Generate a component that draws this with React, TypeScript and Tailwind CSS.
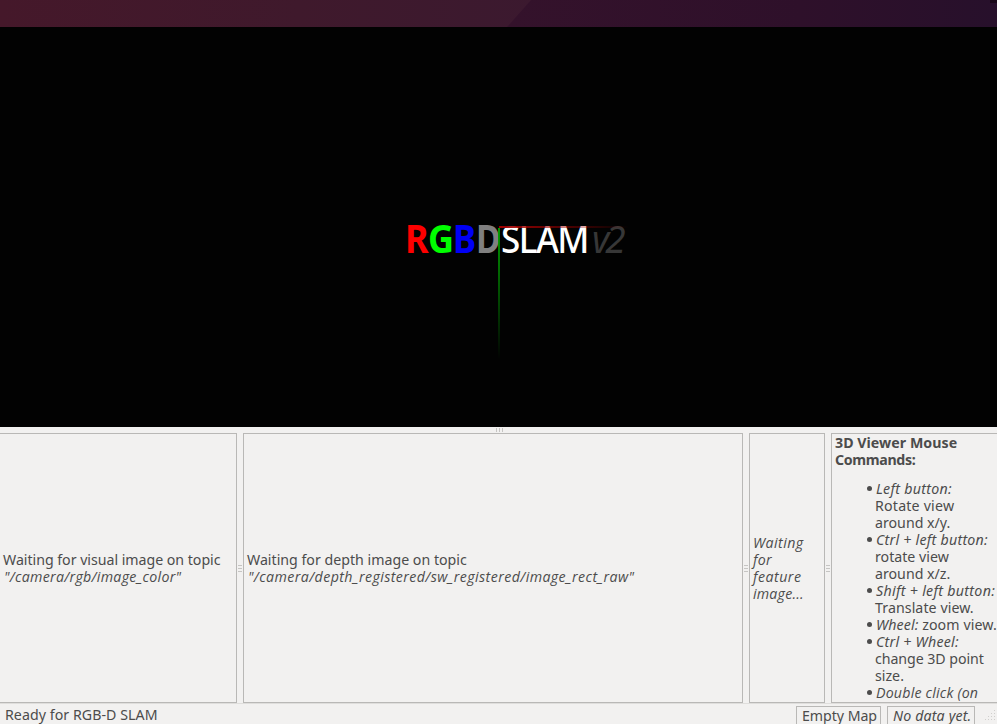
import type { ReactNode } from 'react';

function Grip({ vertical = false }: { vertical?: boolean }) {
  return vertical ? (
    <div className="flex h-full w-[6px] shrink-0 flex-col items-center justify-center gap-[2px]">
      <i className="h-px w-[4px] bg-[#c6c5c3]" />
      <i className="h-px w-[4px] bg-[#c6c5c3]" />
      <i className="h-px w-[4px] bg-[#c6c5c3]" />
    </div>
  ) : (
    <div className="flex h-[6px] w-full shrink-0 items-center justify-center gap-[2px] pl-[2px]">
      <i className="h-[4px] w-px bg-[#c6c5c3]" />
      <i className="h-[4px] w-px bg-[#c6c5c3]" />
      <i className="h-[4px] w-px bg-[#c6c5c3]" />
    </div>
  );
}

function Line({ className = '', children }: { className?: string; children: ReactNode }) {
  return <div className={`h-[17px] whitespace-nowrap ${className}`}>{children}</div>;
}

function Item({ children }: { children: ReactNode }) {
  return (
    <li className="relative">
      <span className="absolute top-[6px] -left-[8px] size-[5px] rounded-full bg-[#4c4c4c]" />
      {children}
    </li>
  );
}

function Logo() {
  return (
    <div className="flex h-[40px] w-[222px] text-[40px] leading-[40px] font-bold">
      <span className="w-[23px] origin-left scale-x-[0.9] text-[#fe0000]">R</span>
      <span className="w-[25px] origin-left scale-x-[0.9] text-[#00fe00]">G</span>
      <span className="w-[23px] origin-left scale-x-[0.87] text-[#0000f5]">B</span>
      <span className="w-[25px] origin-left scale-x-[0.84] text-[#808080]">D</span>
      <span className="w-[91px] origin-left scale-x-[0.91] text-[38.5px] font-medium tracking-[-1.7px] text-white">SLAM</span>
      <span className="w-[34px] origin-left scale-x-[0.97] text-[38px] font-normal tracking-[-4px] text-[#373737] italic">v2</span>
    </div>
  );
}

function SizeGrip() {
  return (
    <svg className="mt-[6px] ml-[9px] h-[12px] w-[13px]" viewBox="0 0 13 12" fill="#d0cfcd">
      <path d="M10 0h1v1h-1zM7 3h1v1h-1zM10 3h1v1h-1zM4 6h1v1h-1zM7 6h1v1h-1zM10 6h1v1h-1zM1 9h1v1h-1zM4 9h1v1h-1zM7 9h1v1h-1zM10 9h1v1h-1z" />
    </svg>
  );
}

export default function App() {
  return (
    <div className="flex h-[724px] w-[997px] flex-col overflow-hidden bg-[#f2f1f0] font-['Noto_Sans','Open_Sans',sans-serif] text-[14.2px] leading-[17px] text-[#4c4c4c]">
      <header className="flex h-[27px] shrink-0 justify-end bg-[linear-gradient(90deg,#45182a_0%,#3f192c_30%,#3b192f_55%,#3a192f_100%)]">
        <div className="h-full w-[490px] bg-[linear-gradient(90deg,#34122b_0%,#2e102a_60%,#27102b_100%)] [clip-path:polygon(24px_0,100%_0,100%_100%,0_100%)]">
          <div className="ml-auto h-[3px] w-[7px] bg-[#190818]" />
        </div>
      </header>
      <main className="relative h-[400px] shrink-0 bg-[#020202]">
        <div className="absolute top-[191px] left-[405px]"><Logo /></div>
        <div className="absolute top-[199px] left-[499px] h-[2px] w-[130px] bg-linear-to-r from-[#a00000] to-transparent" />
        <div className="absolute top-[201px] left-[498px] h-[131px] w-[2px] bg-linear-to-b from-[#009c00] to-transparent" />
      </main>
      <Grip />
      <section className="flex h-[270px] shrink-0">
        <div className="flex w-[237px] shrink-0 flex-col justify-center border border-l-0 border-[#b9b8b6] pl-[3px]">
          <Line className="tracking-[-0.03px]">Waiting for visual image on topic</Line>
          <Line className="pl-px font-['Open_Sans',sans-serif] tracking-[0.29px] italic">"/camera/rgb/image_color"</Line>
        </div>
        <Grip vertical />
        <div className="flex w-[500px] shrink-0 flex-col justify-center border border-[#b9b8b6] pl-[3px]">
          <Line>Waiting for depth image on topic</Line>
          <Line className="pl-px font-['Open_Sans',sans-serif] tracking-[0.41px] italic">"/camera/depth_registered/sw_registered/image_rect_raw"</Line>
        </div>
        <Grip vertical />
        <div className="flex w-[76px] shrink-0 flex-col justify-center border border-[#b9b8b6] pl-[3px] font-['Open_Sans',sans-serif] italic">
          <Line className="tracking-[0.45px]">Waiting</Line>
          <Line className="tracking-[0.35px]">for</Line>
          <Line className="tracking-[0.5px]">feature</Line>
          <Line className="tracking-[0.2px]">image...</Line>
        </div>
        <Grip vertical />
        <div className="w-[166px] shrink-0 overflow-hidden border border-r-0 border-[#b9b8b6] pl-[3px]">
          <div className="font-bold">
            <Line className="tracking-[0.04px]">3D Viewer Mouse</Line>
            <Line className="tracking-[-0.35px]">Commands:</Line>
          </div>
          <ul className="mt-[12px] ml-[40px]">
            <Item>
              <Line className="pl-px tracking-[0.3px] italic">Left button:</Line>
              <Line className="tracking-[0.2px]">Rotate view</Line>
              <Line>around x/y.</Line>
            </Item>
            <Item>
              <Line className="pl-px tracking-[0.25px] italic">Ctrl + left button:</Line>
              <Line>rotate view</Line>
              <Line>around x/z.</Line>
            </Item>
            <Item>
              <Line className="pl-px tracking-[0.3px] italic">Shift + left button:</Line>
              <Line className="tracking-[0.07px]">Translate view.</Line>
            </Item>
            <Item>
              <Line className="pl-px tracking-[0.09px]"><em>Wheel:</em> zoom view.</Line>
            </Item>
            <Item>
              <Line className="pl-px tracking-[0.25px] italic">Ctrl + Wheel:</Line>
              <Line className="tracking-[-0.06px]">change 3D point</Line>
              <Line>size.</Line>
            </Item>
            <Item>
              <Line className="pl-px font-['Open_Sans',sans-serif] tracking-[0.2px] italic">Double click (on</Line>
            </Item>
          </ul>
        </div>
      </section>
      <footer className="flex h-[21px] shrink-0 border-t border-[#dfdedc]">
        <div className="w-[796px] pt-[2px] pl-[5px] tracking-[0.05px]">Ready for RGB-D SLAM</div>
        <div className="mt-[2px] w-[85px] border border-b-0 border-[#b9b8b6] pl-[5px] tracking-[-0.05px] whitespace-nowrap">Empty Map</div>
        <div className="mt-[2px] ml-[6px] w-[88px] border border-b-0 border-[#b9b8b6] pl-[5px] tracking-[0.15px] whitespace-nowrap italic">No data yet.</div>
        <SizeGrip />
      </footer>
    </div>
  );
}
